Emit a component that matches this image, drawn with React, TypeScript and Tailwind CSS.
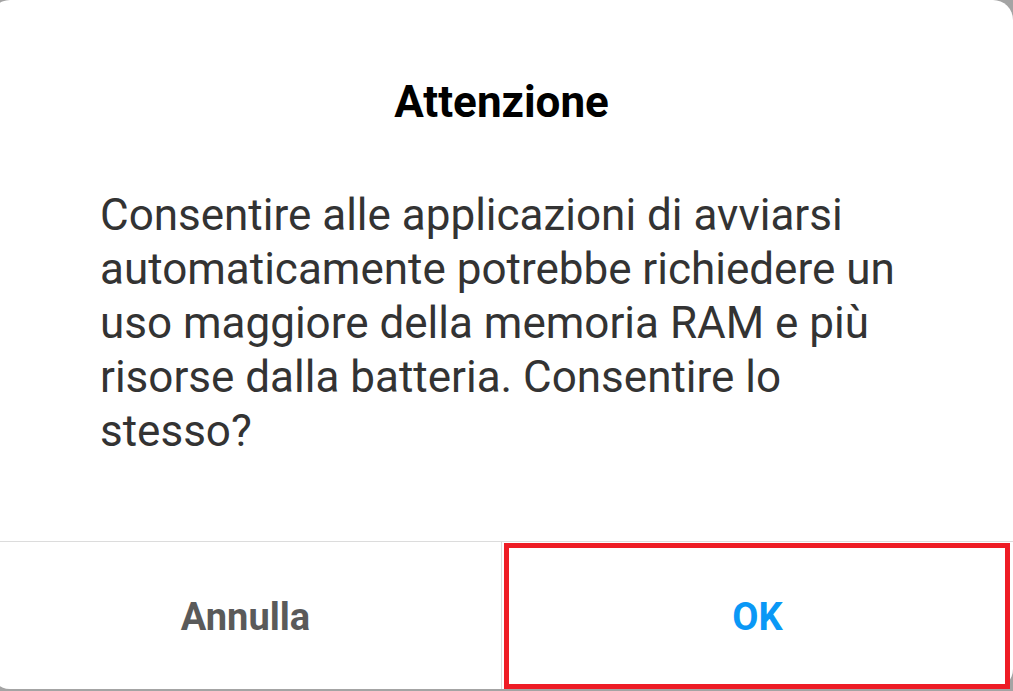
export default function App() {
  return (
    <div className="w-[1013px] h-[691px] overflow-hidden bg-[#a4a4a4] font-['Roboto',sans-serif]">
      <div className="ml-[-10px] w-[1023px] h-[689px] bg-white rounded-[20px] flex flex-col">
        <h1 className="pt-[76px] text-center text-[44px] leading-[52px] font-bold text-black">Attenzione</h1>
        <p className="mt-[60px] pl-[110px] w-[920px] text-[44px] leading-[54px] text-[#333333]">
          Consentire alle applicazioni di avviarsi automaticamente potrebbe richiedere un uso maggiore della
          memoria RAM e più risorse dalla batteria. Consentire lo stesso?
        </p>
        <div className="mt-auto h-[148px] flex border-t border-[#dcdcdc]">
          <button className="w-[512px] pt-[4px] border-r border-[#dcdcdc] flex items-center justify-center text-[38px] font-bold text-[#5a5a5a]">
            Annulla
          </button>
          <div className="relative flex-1 pt-[4px] flex items-center justify-center">
            <button className="text-[38px] font-bold text-[#0a98f6]">OK</button>
            <div className="absolute left-[2px] top-[1px] right-[3px] bottom-0 border-[5px] border-[#ee1c25]" />
          </div>
        </div>
      </div>
    </div>
  );
}
